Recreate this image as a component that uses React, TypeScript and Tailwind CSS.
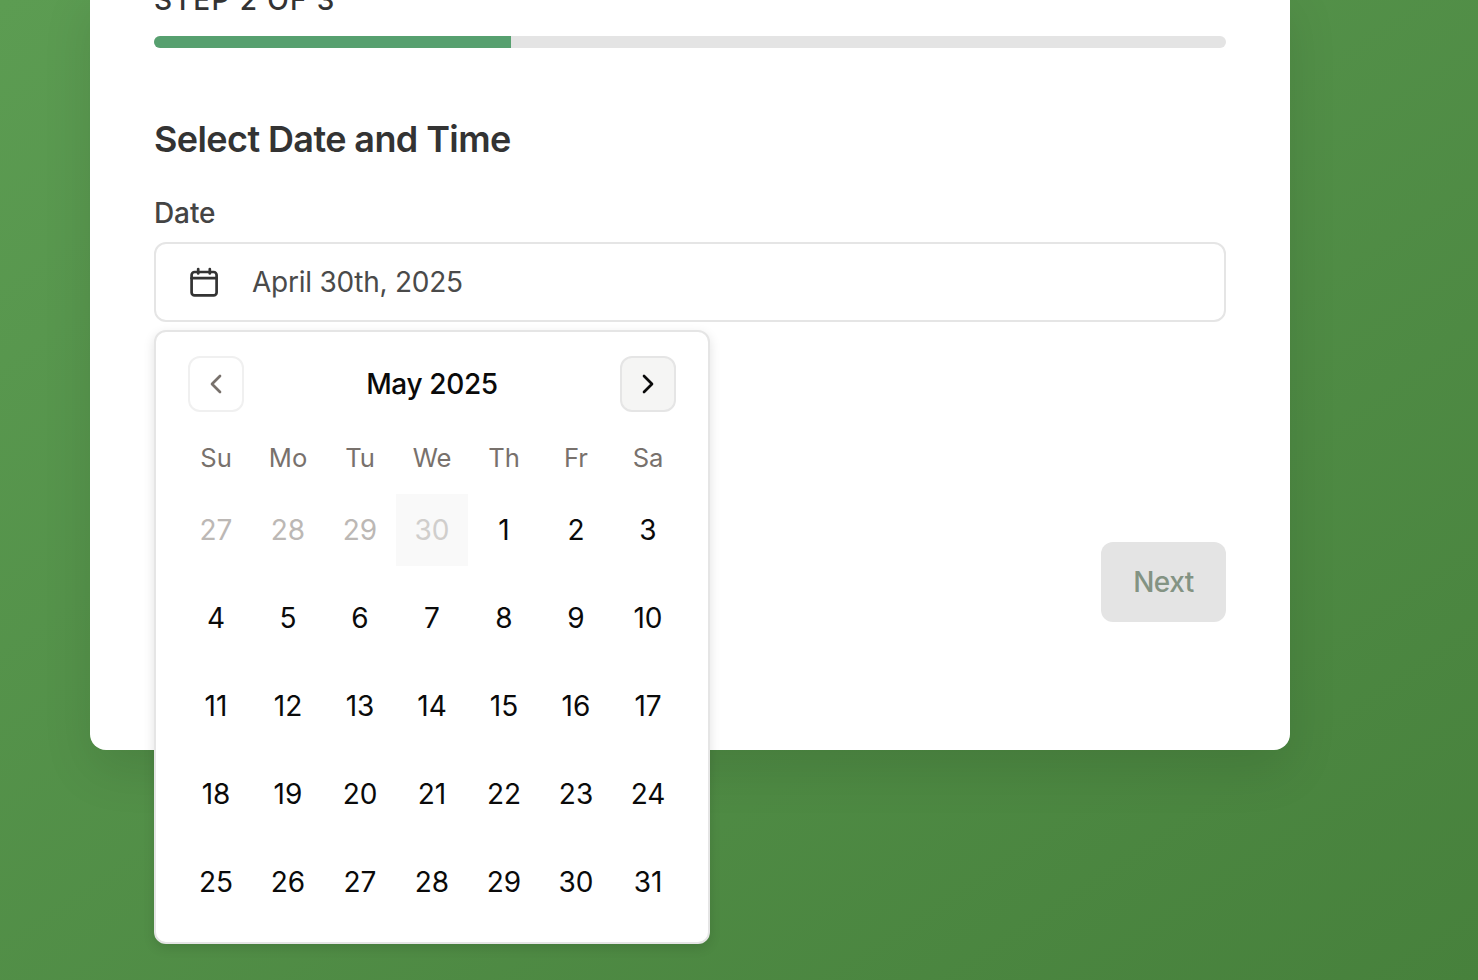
import { ChevronLeft, ChevronRight } from "lucide-react";

const weekdays = ["Su", "Mo", "Tu", "We", "Th", "Fr", "Sa"];
const outside = ["27", "28", "29", "30"];
const days = Array.from({ length: 31 }, (_, i) => i + 1);

export default function App() {
  return (
    <div className="relative h-[980px] w-full overflow-hidden bg-gradient-to-br from-[#5c9c52] to-[#47813c] pl-[90px] font-['Inter',sans-serif]">
      <div className="-mt-[12px] h-[762px] w-[1200px] rounded-b-2xl bg-white px-16 shadow-[0_20px_50px_rgba(0,0,0,0.1)]">
        <div className="h-8 text-[28px] leading-[24px] font-medium tracking-[0.05em] text-[#333333]">STEP 2 OF 3</div>
        <div className="mt-4 h-3 overflow-hidden rounded-full bg-[#e4e4e4]">
          <div className="h-full w-[357px] bg-[#57a06f]" />
        </div>
        <h2 className="mt-[67px] text-4xl leading-[48px] font-semibold tracking-[-0.6px] text-[#333333]">Select Date and Time</h2>
        <label className="mt-[32px] block text-[28px] leading-9 font-medium tracking-[-0.1px] text-[#444444]">Date</label>
        <div className="mt-[11px] flex h-20 items-center rounded-xl border-2 border-[#e5e5e5] bg-white pl-8 text-[28px] tracking-[-0.25px] text-[#4a4a4a]">
          <svg width="32" height="32" viewBox="0 0 32 32" fill="none" stroke="#333333" strokeWidth="2.7" strokeLinecap="round" strokeLinejoin="round">
            <rect x="3.6" y="6" width="25" height="23.4" rx="3" />
            <path d="M3.6 12.2H28.4" />
            <path d="M10.2 3V7.5" />
            <path d="M21.8 3V7.5" />
          </svg>
          <span className="ml-8">April 30th, 2025</span>
        </div>
        <div className="mt-[220px] flex justify-end">
          <button className="flex h-20 w-[125px] items-center justify-center rounded-xl bg-[#e4e4e4] text-[28px] font-medium tracking-[-0.5px] text-[#839383]">Next</button>
        </div>
      </div>

      <div className="absolute left-[154px] top-[330px] w-[556px] rounded-xl border-2 border-[#e5e5e5] bg-white p-6 shadow-[0_4px_12px_rgba(0,0,0,0.12)]">
        <div className="flex h-14 items-center justify-between px-2">
          <button className="flex h-14 w-14 items-center justify-center rounded-xl border-2 border-[#f0f0f0] bg-white text-[#78716c]">
            <ChevronLeft className="h-8 w-8" strokeWidth={2} />
          </button>
          <span className="text-[28px] font-medium tracking-[-0.35px] text-[#0a0a0a]">May 2025</span>
          <button className="flex h-14 w-14 items-center justify-center rounded-xl border-2 border-[#e5e5e5] bg-[#f5f5f4] text-[#0a0a0a]">
            <ChevronRight className="h-8 w-8" strokeWidth={2} />
          </button>
        </div>
        <div className="mt-[26px] grid grid-cols-7">
          {weekdays.map((d) => (
            <div key={d} className="flex h-10 items-center justify-center text-[25.6px] tracking-[-0.1px] text-[#78716c]">{d}</div>
          ))}
        </div>
        <div className="mt-4 grid grid-cols-7 gap-y-4">
          {outside.map((d) => (
            <div key={d} className={d === "30" ? "flex h-[72px] items-center justify-center bg-[#f9f9f9] text-[28px] text-[#d0cecc]" : "flex h-[72px] items-center justify-center text-[28px] text-[#bcb8b5]"}>{d}</div>
          ))}
          {days.map((d) => (
            <div key={d} className="flex h-[72px] items-center justify-center text-[28px] text-[#0a0a0a]">{d}</div>
          ))}
        </div>
      </div>
    </div>
  );
}
